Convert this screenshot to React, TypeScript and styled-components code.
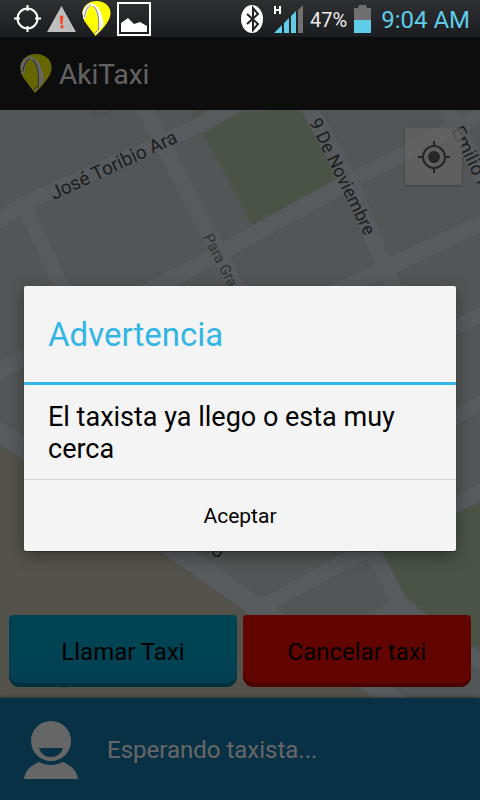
import React from 'react';
import styled, { createGlobalStyle } from 'styled-components';

const GlobalStyle = createGlobalStyle`
  *, *::before, *::after { box-sizing: border-box; }
  body { margin: 0; background: #000; font-family: Roboto, "Noto Sans", sans-serif; }
  button { font-family: inherit; border: 0; padding: 0; cursor: pointer; }
  h1, h2, p { margin: 0; font-weight: 400; }
`;

const Phone = styled.div`
  display: flex;
  flex-direction: column;
  min-height: 100vh;
`;

const StatusBar = styled.header`
  display: flex;
  align-items: center;
  justify-content: space-between;
  height: 37px;
  padding: 0 10px 0 14px;
  background: linear-gradient(#2f3032, #1b1c20);
`;

const StatusGroup = styled.div<{ $gap: number }>`
  display: flex;
  align-items: center;
  gap: ${(p) => p.$gap}px;
`;

const StatusText = styled.span<{ $size: number; $color: string }>`
  font-size: ${(p) => p.$size}px;
  line-height: 32px;
  padding-top: 3px;
  color: ${(p) => p.$color};
`;

const AppArea = styled.div`
  position: relative;
  display: flex;
  flex-direction: column;
  flex: 1;
`;

const ActionBar = styled.div`
  display: flex;
  align-items: center;
  gap: 7px;
  height: 73px;
  padding: 0 20px;
  background: #222;
  color: #f4f4f4;
`;

const AppTitle = styled.h1`
  padding-top: 2px;
  font-size: 28px;
  line-height: 32px;
`;

const MapArea = styled.main`
  position: relative;
  display: flex;
  flex: 1;
  flex-direction: column;
  justify-content: space-between;
  padding: 18px 9px 11px;
  overflow: hidden;
  background: #d0d8d8;
`;

const MapCanvas = styled.svg`
  position: absolute;
  inset: 0;
  width: 100%;
  height: 100%;
`;

const LocateButton = styled.button`
  position: relative;
  display: flex;
  align-items: center;
  justify-content: center;
  align-self: flex-end;
  width: 57px;
  height: 57px;
  margin-right: 9px;
  border-radius: 2px;
  background: rgba(250, 250, 245, 0.65);
  box-shadow: 0 1px 3px rgba(0, 0, 0, 0.3);
`;

const MapActions = styled.div`
  position: relative;
  display: flex;
  gap: 6px;
`;

const TaxiButton = styled.button<{ $top: string; $bottom: string; $edge: string }>`
  flex: 1;
  height: 72px;
  padding-top: 2px;
  border-radius: 4px 4px 11px 11px;
  background: linear-gradient(${(p) => p.$top} 50%, ${(p) => p.$bottom});
  box-shadow: inset 0 -4px ${(p) => p.$edge};
  color: #000;
  font-size: 24px;
  line-height: 32px;
`;

const DriverBar = styled.footer`
  display: flex;
  align-items: center;
  gap: 29px;
  height: 102px;
  padding: 2px 24px 0;
  background: #147aac;
  box-shadow: 0 -1px 4px rgba(0, 0, 0, 0.4);
  color: #fff;
  font-size: 24px;
  line-height: 32px;
  z-index: 0;
`;

const Scrim = styled.div`
  position: absolute;
  inset: 0;
  z-index: 1;
  display: flex;
  align-items: center;
  padding: 0 24px;
  background: rgba(0, 0, 0, 0.6);
`;

const Dialog = styled.section`
  flex: 1;
  overflow: hidden;
  border-radius: 2px;
  background: #f4f4f4;
  box-shadow: 0 5px 16px rgba(0, 0, 0, 0.35), 0 1px 1px rgba(0, 0, 0, 0.3);
`;

const DialogTitle = styled.h2`
  padding: 29px 24px 27px;
  border-bottom: 3px solid #33b5e5;
  color: #33b5e5;
  font-size: 33px;
  line-height: 40px;
`;

const DialogMessage = styled.p`
  padding: 16px 24px 14px;
  color: #000;
  font-size: 27px;
  line-height: 32px;
`;

const DialogButton = styled.button`
  display: block;
  width: 100%;
  height: 72px;
  border-top: 1px solid #d5d5d5;
  background: transparent;
  color: #000;
  font-size: 21px;
  line-height: 32px;
`;

const Balloon = ({ width, height }: { width: number; height: number }) => (
  <svg width={width} height={height} viewBox="0 0 28 35" aria-hidden="true">
    <path d="M0 11C1 4 7 0 14 0c8 0 14 5 14 12 0 6-4 11-9 17l-6 6L4 23C1 19 0 16 0 11Z" fill="#ffff02" />
    <path d="M0 11C2 6 5 2 9 2c7 2 11 10 12 22l-7 9-2-2 4-2C17 18 13 6 9 4 6 6 4 11 3 18H1Z" fill="#fff" />
    <path d="M11 5C15 9 17 17 16 29l-4 3M2 16C3 9 5 6 8 4" fill="none" stroke="#7b7b87" strokeWidth="1" />
  </svg>
);

const CrosshairIcon = () => (
  <svg width="27" height="27" viewBox="0 0 27 27" fill="none" stroke="#fff" strokeWidth="2" aria-hidden="true">
    <circle cx="13.500" cy="13.500" r="10" />
    <path d="M13.500 0v6M13.500 21v6M0 13.500h6M21 13.500h6" />
  </svg>
);

const AlertIcon = () => (
  <svg width="29" height="26" viewBox="0 0 30 27" aria-hidden="true">
    <path d="M15 0 30 27H0Z" fill="#bebebe" />
    <path d="M13 10h4l-1 9h-2ZM14 20h3v3h-3Z" fill="#f04a20" />
  </svg>
);

const PictureIcon = () => (
  <svg width="34" height="34" viewBox="0 0 34 34" aria-hidden="true">
    <rect x="1" y="1" width="32" height="32" fill="none" stroke="#fff" strokeWidth="2" />
    <path d="M4 30V21l7-5 6 6 6-2 7 4v6Z" fill="#fff" />
  </svg>
);

const BluetoothIcon = () => (
  <svg width="22" height="28" viewBox="0 0 22 28" aria-hidden="true">
    <ellipse cx="11" cy="14" rx="11" ry="14" fill="#fff" />
    <path d="m6 9 11 10-5 6V3l5 6L6 19" fill="none" stroke="#222326" strokeWidth="2" />
  </svg>
);

const SignalIcon = () => (
  <svg width="33" height="28" viewBox="-4 0 33 28" aria-hidden="true">
    <path d="M1 1v8M6 1v8M1 5h5" stroke="#fff" strokeWidth="2" fill="none" />
    <path d="M0 28 8 20v8ZM10 18l5-5v15h-5ZM17 11l5-5v22h-5Z" fill="#5fcde8" />
    <path d="m24 5 5-5v28h-5Z" fill="#707070" />
  </svg>
);

const BatteryIcon = () => (
  <svg width="20" height="28" viewBox="0 0 20 28" aria-hidden="true">
    <path d="M0 3h4l1-3h7l1 3h4v13H0Z" fill="#707070" />
    <path d="M0 15h17v13H0Z" fill="#5fcde8" />
  </svg>
);

const LocateIcon = () => (
  <svg width="32" height="32" viewBox="0 0 32 32" fill="none" stroke="#606060" strokeWidth="2" aria-hidden="true">
    <circle cx="16" cy="16" r="11" />
    <circle cx="16" cy="16" r="6" fill="#606060" stroke="none" />
    <path d="M16 0v5M16 27v5M0 16h5M27 16h5" />
  </svg>
);

const DriverIcon = () => (
  <svg width="54" height="58" viewBox="0 0 54 58" fill="#fff" aria-hidden="true">
    <path fillRule="evenodd" d="M27 0a20 20 0 1 1 0 40 20 20 0 0 1 0-40ZM15 27c2 6 6 9 12 9s10-3 12-9Z" />
    <path d="M15 41c8 4 16 4 24 0 9 4 14 9 15 17H0c1-8 6-13 15-17Z" />
  </svg>
);

const streets = [
  { d: 'M-10 226 25 203 163 142 200 125 250 97', w: 16 },
  { d: 'M140 100 213 241 260 335', w: 17 },
  { d: 'M24 205 62 287 90 345', w: 16 },
  { d: 'M-10 376 24 358 157 287 240 242 353 180 447 132 490 110', w: 17 },
  { d: 'M305 99 350 182 382 260 410 325', w: 17 },
  { d: 'M200 355 387 268 490 219', w: 17 },
  { d: 'M444 100 490 192', w: 17 },
  { d: 'M400 355 456 327 490 310', w: 15 },
  { d: 'M400 444 456 416 490 400', w: 16 },
  { d: 'M262 607 353 557 456 504 490 488', w: 16 },
  { d: 'M350 510 372 551 399 602 422 622 490 668', w: 16 },
  { d: 'M399 605 335 643', w: 16 },
  { d: 'M-10 425 24 448 180 553 240 595 383 692 400 705', w: 20 },
];

const CityMap = () => (
  <MapCanvas viewBox="0 110 480 588" preserveAspectRatio="xMidYMid slice" aria-hidden="true">
    <path d="M203 133 240 112 301 108 337 182 253 227ZM190 120 208 108H197Z" fill="#b9d0af" />
    <path d="M-10 425 400 705H-10Z" fill="#d0d0bb" />
    <path d="M376 545 490 488V668L422 622 399 602Z" fill="#b9d0af" />
    <path d="M92 108C94 116 103 118 111 110" fill="none" stroke="#c3c8ca" strokeWidth="3" />
    {streets.map((s) => (
      <path key={s.d} d={s.d} fill="none" stroke="#c6cccc" strokeWidth={s.w + 2} strokeLinejoin="round" />
    ))}
    {streets.map((s) => (
      <path key={s.d} d={s.d} fill="none" stroke="#dde4ea" strokeWidth={s.w} strokeLinejoin="round" />
    ))}
    <g fill="#484c4e" fontFamily="Roboto, sans-serif" fontSize="19">
      <text transform="translate(54 200) rotate(-25)">José Toribio Ara</text>
      <text transform="translate(309 122) rotate(64)" fontSize="18">9 De Noviembre</text>
      <text transform="translate(451 130) rotate(64)">Emilio Fa</text>
      <text transform="translate(210 553) rotate(35)">o</text>
      <text transform="translate(203 237) rotate(63)" fontSize="15" fill="#777d7f">Para Grande</text>
    </g>
    <path d="M59 684q5 5 10 0" fill="none" stroke="#60676a" strokeWidth="2" />
  </MapCanvas>
);

export default function App() {
  return (
    <>
      <GlobalStyle />
      <Phone>
        <StatusBar>
          <StatusGroup $gap={6}>
            <CrosshairIcon />
            <AlertIcon />
            <Balloon width={29} height={35} />
            <PictureIcon />
          </StatusGroup>
          <StatusGroup $gap={7}>
            <BluetoothIcon />
            <SignalIcon />
            <StatusText $size={20} $color="#eee">47%</StatusText>
            <BatteryIcon />
            <StatusText $size={24} $color="#5fcde8">9:04 AM</StatusText>
          </StatusGroup>
        </StatusBar>
        <AppArea>
          <ActionBar>
            <Balloon width={32} height={39} />
            <AppTitle>AkiTaxi</AppTitle>
          </ActionBar>
          <MapArea>
            <CityMap />
            <LocateButton type="button" aria-label="Mi ubicación">
              <LocateIcon />
            </LocateButton>
            <MapActions>
              <TaxiButton type="button" $top="#00aad2" $bottom="#109cd0" $edge="#08789e">Llamar Taxi</TaxiButton>
              <TaxiButton type="button" $top="#f50a00" $bottom="#f50a00" $edge="#b80500">Cancelar taxi</TaxiButton>
            </MapActions>
          </MapArea>
          <DriverBar>
            <DriverIcon />
            <span>Esperando taxista...</span>
          </DriverBar>
          <Scrim>
            <Dialog role="dialog" aria-modal="true" aria-labelledby="dialog-title" aria-describedby="dialog-message">
              <DialogTitle id="dialog-title">Advertencia</DialogTitle>
              <DialogMessage id="dialog-message">El taxista ya llego o esta muy cerca</DialogMessage>
              <DialogButton type="button">Aceptar</DialogButton>
            </Dialog>
          </Scrim>
        </AppArea>
      </Phone>
    </>
  );
}
